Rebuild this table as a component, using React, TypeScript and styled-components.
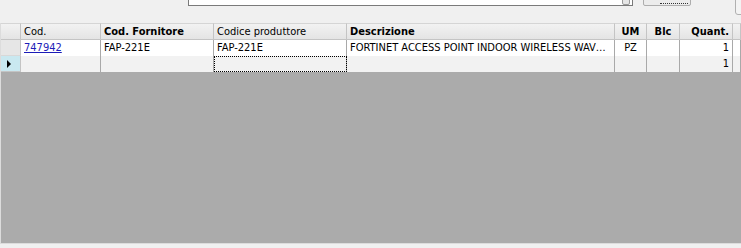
import styled, { createGlobalStyle } from 'styled-components';

const GlobalStyle = createGlobalStyle`
  html, body {
    margin: 0;
    padding: 0;
    background: #f0f0f0;
  }
  body {
    font-family: Tahoma, "DejaVu Sans Condensed", "Liberation Sans", sans-serif;
    font-size: 11px;
    color: #000;
  }
`;

const Window = styled.div`
  width: 741px;
  height: 248px;
  display: flex;
  flex-direction: column;
  overflow: hidden;
  background: #f0f0f0;
`;

const TopBar = styled.div`
  height: 23px;
  flex: none;
  display: flex;
  align-items: flex-start;
  overflow: hidden;

  & > * {
    flex: none;
  }
`;

const SearchBox = styled.div`
  margin: -14px 0 0 188px;
  width: 445px;
  height: 20px;
  box-sizing: border-box;
  border: 1px solid #7a7a7a;
  background: #fff;
  position: relative;
  font-family: "Liberation Sans", sans-serif;
  font-size: 12px;
  line-height: 13px;
  padding-left: 116px;
  color: #333;
`;

const DropButton = styled.div`
  position: absolute;
  right: 2px;
  top: 2px;
  width: 6px;
  height: 14px;
  border: 1px solid #9a9a9a;
  border-radius: 2px;
  background: #e6e6e6;
`;

const ActionButton = styled.div`
  margin: -14px 0 0 10px;
  width: 48px;
  height: 20px;
  box-sizing: border-box;
  border: 1px solid #adadad;
  border-radius: 2px;
  background: #ececec;
  position: relative;

  &::after {
    content: '';
    position: absolute;
    left: 16px;
    right: 2px;
    bottom: 1px;
    border-bottom: 1px dotted #333;
  }
`;

const SideControl = styled.div`
  margin: -8px 0 0 44px;
  width: 20px;
  height: 23px;
  box-sizing: border-box;
  border: 1px solid #b0b0b0;
  border-radius: 3px;
  background: #f3f3f3;
`;

const Grid = styled.div`
  flex: 1;
  display: flex;
  flex-direction: column;
  background: #ababab;
  border-left: 1px solid #dcdcdc;
  border-bottom: 1px solid #dcdcdc;
  margin-bottom: 4px;
  overflow: hidden;
`;

const columns = '20px 80px 113px 133px 268px 32px 33px 53px 1fr';

const Row = styled.div<{ $bg: string; $height: number }>`
  display: grid;
  grid-template-columns: ${columns};
  height: ${(p) => p.$height}px;
  background: ${(p) => p.$bg};
  flex: none;
`;

const HeaderCell = styled.div<{ $bold?: boolean; $align?: string }>`
  box-sizing: border-box;
  border-top: 1px solid #d5d5d5;
  border-right: 1px solid #c4c4c4;
  border-bottom: 1px solid #c4c4c4;
  background: linear-gradient(#f2f2f2, #e4e4e4);
  padding: 0 3px;
  font-weight: ${(p) => (p.$bold ? 700 : 400)};
  text-align: ${(p) => p.$align || 'left'};
  line-height: 15px;
  white-space: nowrap;
  overflow: hidden;
`;

const RowHeader = styled.div<{ $current?: boolean }>`
  box-sizing: border-box;
  border-right: 1px solid #c4c4c4;
  border-bottom: 1px solid ${(p) => (p.$current ? '#c4c4c4' : '#d8d8d8')};
  background: ${(p) => (p.$current ? '#c9e8f0' : '#e6e6e6')};
  display: flex;
  align-items: center;
  padding-left: 6px;
`;

const Arrow = styled.div`
  width: 0;
  height: 0;
  border-top: 4px solid transparent;
  border-bottom: 4px solid transparent;
  border-left: 4px solid #000;
`;

const Cell = styled.div<{ $align?: string; $focus?: boolean }>`
  box-sizing: border-box;
  border-right: 1px solid #a9a9a9;
  padding: 0 3px;
  line-height: 15px;
  text-align: ${(p) => p.$align || 'left'};
  white-space: nowrap;
  overflow: hidden;
  text-overflow: ellipsis;
  outline: ${(p) => (p.$focus ? '1px dotted #000' : 'none')};
  outline-offset: -1px;
`;

const Link = styled.a`
  color: #1c1cb8;
  text-decoration: underline;
`;

const headers = [
  { label: 'Cod.' },
  { label: 'Cod. Fornitore', bold: true },
  { label: 'Codice produttore' },
  { label: 'Descrizione', bold: true },
  { label: 'UM', bold: true, align: 'center' },
  { label: 'Blc', bold: true, align: 'center' },
  { label: 'Quant.', bold: true, align: 'right' },
  { label: '' },
];

export default function App() {
  return (
    <>
      <GlobalStyle />
      <Window>
        <TopBar>
          <SearchBox>
            Oggetti
            <DropButton />
          </SearchBox>
          <ActionButton />
          <SideControl />
        </TopBar>
        <Grid>
          <Row $bg="#e6e6e6" $height={17}>
            <HeaderCell />
            {headers.map((h, i) => (
              <HeaderCell key={i} $bold={h.bold} $align={h.align}>
                {h.label}
              </HeaderCell>
            ))}
          </Row>
          <Row $bg="#ffffff" $height={16}>
            <RowHeader />
            <Cell>
              <Link>747942</Link>
            </Cell>
            <Cell>FAP-221E</Cell>
            <Cell>FAP-221E</Cell>
            <Cell>FORTINET ACCESS POINT INDOOR WIRELESS WAVE 2 802.11AC</Cell>
            <Cell $align="center">PZ</Cell>
            <Cell />
            <Cell $align="right">1</Cell>
            <Cell />
          </Row>
          <Row $bg="#f2f2f2" $height={16}>
            <RowHeader $current>
              <Arrow />
            </RowHeader>
            <Cell />
            <Cell />
            <Cell $focus />
            <Cell />
            <Cell />
            <Cell />
            <Cell $align="right">1</Cell>
            <Cell />
          </Row>
        </Grid>
      </Window>
    </>
  );
}
